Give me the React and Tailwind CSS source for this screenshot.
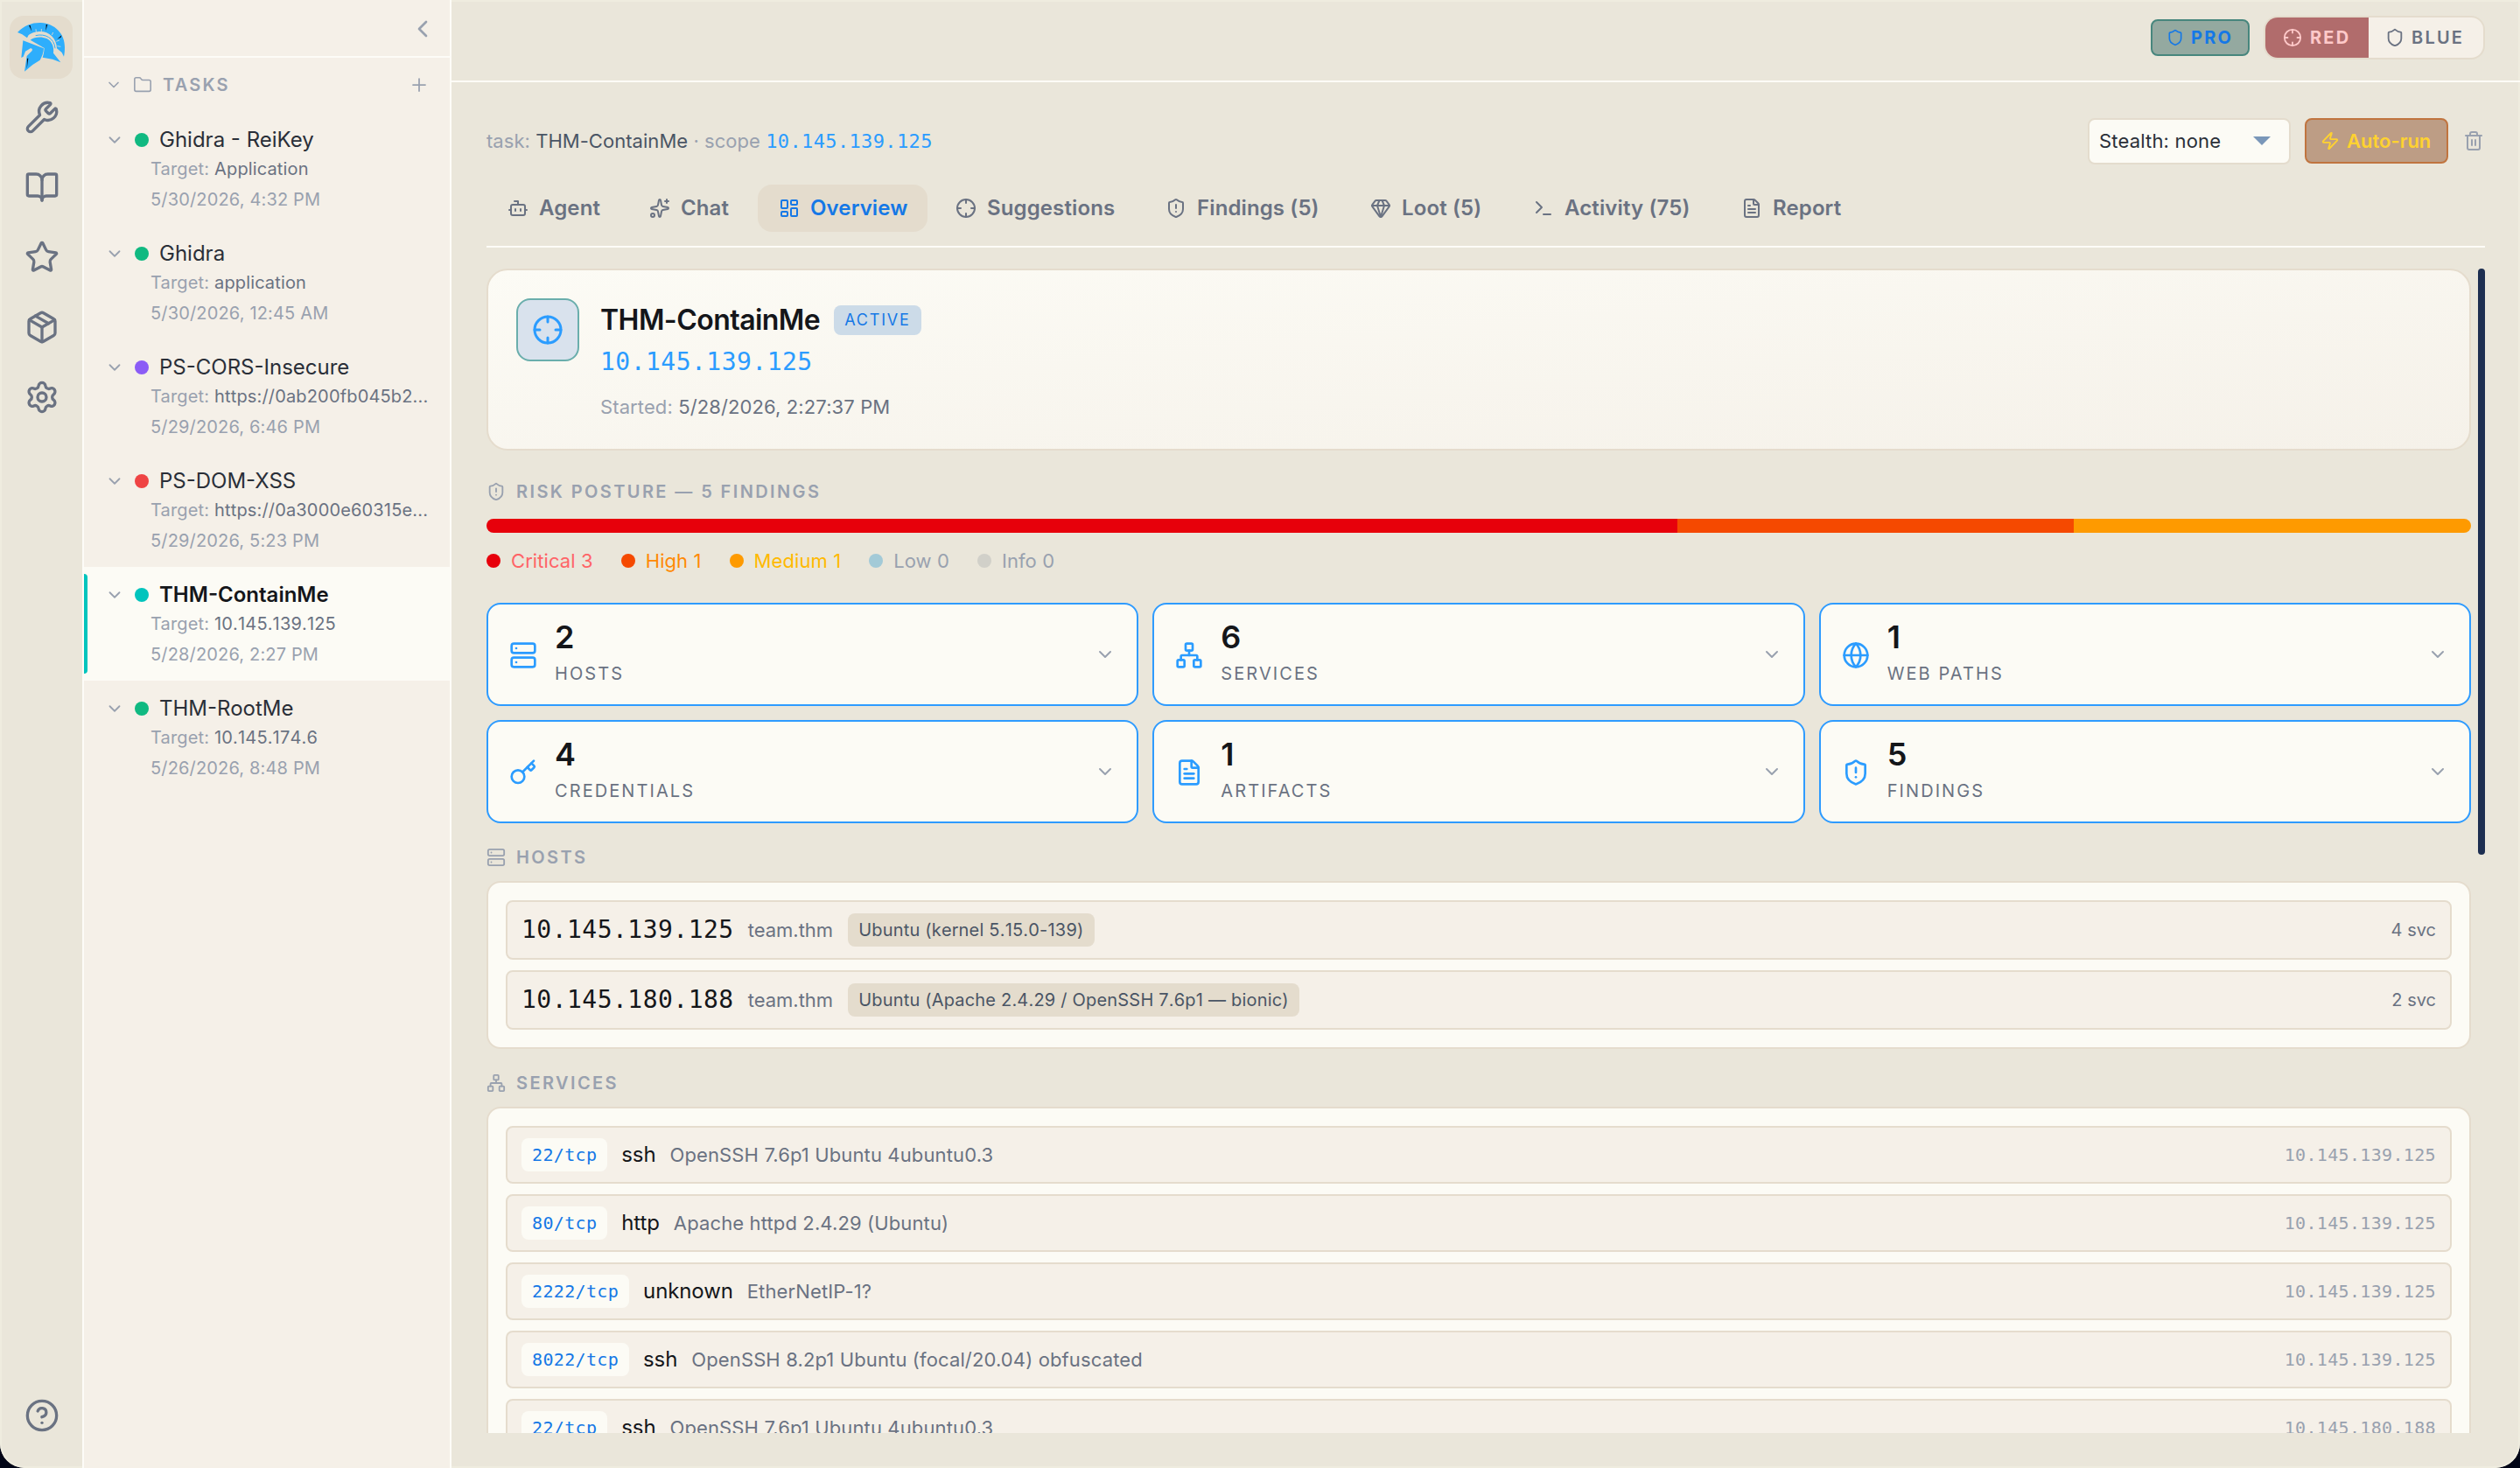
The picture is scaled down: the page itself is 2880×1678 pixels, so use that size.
import { useState } from "react";
import {
  BookOpen,
  Bot,
  ChevronDown,
  ChevronLeft,
  CircleQuestionMark,
  Crosshair,
  FileText,
  Folder,
  Gem,
  Globe,
  Key,
  LayoutDashboard,
  Network,
  Package,
  Plus,
  Server,
  Settings,
  Shield,
  ShieldAlert,
  Sparkles,
  Star,
  Terminal,
  Trash2,
  Wrench,
  Zap,
} from "lucide-react";

const tasks = [
  { name: "Ghidra - ReiKey", target: "Application", date: "5/30/2026, 4:32 PM", dot: "bg-[#10b981]" },
  { name: "Ghidra", target: "application", date: "5/30/2026, 12:45 AM", dot: "bg-[#10b981]" },
  { name: "PS-CORS-Insecure", target: "https://0ab200fb045b2...", date: "5/29/2026, 6:46 PM", dot: "bg-[#8b5cf6]" },
  { name: "PS-DOM-XSS", target: "https://0a3000e60315e...", date: "5/29/2026, 5:23 PM", dot: "bg-[#ef4444]" },
  { name: "THM-ContainMe", target: "10.145.139.125", date: "5/28/2026, 2:27 PM", dot: "bg-[#00c4bd]" },
  { name: "THM-RootMe", target: "10.145.174.6", date: "5/26/2026, 8:48 PM", dot: "bg-[#10b981]" },
];

const tabs = [
  { label: "Agent", icon: Bot, width: "w-[154px]" },
  { label: "Chat", icon: Sparkles, width: "w-[140px]" },
  { label: "Overview", icon: LayoutDashboard, width: "w-[194px]" },
  { label: "Suggestions", icon: Crosshair, width: "w-[232px]" },
  { label: "Findings (5)", icon: ShieldAlert, width: "w-[226px]" },
  { label: "Loot (5)", icon: Gem, width: "w-[178px]" },
  { label: "Activity (75)", icon: Terminal, width: "w-[230px]" },
  { label: "Report", icon: FileText, width: "w-[162px]" },
];

const severities = [
  { label: "Critical", count: 3, dot: "bg-[#e7000b]", text: "text-[#ff6467]" },
  { label: "High", count: 1, dot: "bg-[#f54900]", text: "text-[#ff8904]" },
  { label: "Medium", count: 1, dot: "bg-[#fe9a00]", text: "text-[#ffb900]" },
  { label: "Low", count: 0, dot: "bg-[#a3cad7]", text: "text-[#99a1af]" },
  { label: "Info", count: 0, dot: "bg-[#d1d0c9]", text: "text-[#99a1af]" },
];

const stats = [
  { value: 2, label: "HOSTS", icon: Server },
  { value: 6, label: "SERVICES", icon: Network },
  { value: 1, label: "WEB PATHS", icon: Globe },
  { value: 4, label: "CREDENTIALS", icon: Key },
  { value: 1, label: "ARTIFACTS", icon: FileText },
  { value: 5, label: "FINDINGS", icon: ShieldAlert },
];

const hosts = [
  { ip: "10.145.139.125", name: "team.thm", os: "Ubuntu (kernel 5.15.0-139)", svc: 4 },
  { ip: "10.145.180.188", name: "team.thm", os: "Ubuntu (Apache 2.4.29 / OpenSSH 7.6p1 — bionic)", svc: 2 },
];

const services = [
  { port: "22/tcp", name: "ssh", version: "OpenSSH 7.6p1 Ubuntu 4ubuntu0.3", ip: "10.145.139.125" },
  { port: "80/tcp", name: "http", version: "Apache httpd 2.4.29 (Ubuntu)", ip: "10.145.139.125" },
  { port: "2222/tcp", name: "unknown", version: "EtherNetIP-1?", ip: "10.145.139.125" },
  { port: "8022/tcp", name: "ssh", version: "OpenSSH 8.2p1 Ubuntu (focal/20.04) obfuscated", ip: "10.145.139.125" },
  { port: "22/tcp", name: "ssh", version: "OpenSSH 7.6p1 Ubuntu 4ubuntu0.3", ip: "10.145.180.188" },
];

const Mono = ({ className, children }) => (
  <span className={`font-['DejaVu_Sans_Mono',monospace] tracking-[0.017em] whitespace-nowrap ${className}`}>{children}</span>
);

const Logo = () => (
  <svg viewBox="33 54 216 216" className="size-[72px]" fill="#2eaefc">
    <path d="M60 111 C84 86 112 77 140 78 C187 80 223 116 222 162 C222 176 221 186 219 194 L212 180 L195 166 C194 128 166 106 134 108 C118 109 108 113 98 120 L93 130 L76 118 Z" />
    <path d="M122 122 C154 114 186 130 189 166" fill="none" stroke="#2eaefc" strokeWidth="3" />
    <path d="M104 137 C118 126 142 124 160 132 C178 141 186 160 183 182 L208 214 L180 203 L146 197 C150 186 151 176 152 165 Z" />
    <path d="M79 139 L150 166 C149 182 144 194 137 206 L112 222 L84 245 L92 192 L110 174 Q113 165 104 166 L87 176 L80 194 L73 198 Z" />
    <path d="M124 110 L123 100 M142 109 L142 99 M178 120 L182 111 M193 142 L204 138 M196 158 L208 160" stroke="#e4dccd" strokeWidth="2.5" />
    <path d="M99 87 L104 87 L109 108 Z M158 84 L163 84 L157 106 Z M211 121 L209 128 L196 134 Z M93 200 L97 200 L92 236 Z" fill="#07121f" />
  </svg>
);

const Rail = () => (
  <nav className="flex w-24 shrink-0 flex-col items-center border-r-2 border-[#fdfcf7] pt-[18px] pb-10 text-[#6a7282]">
    <button className="mb-6 size-[72px] rounded-2xl bg-[#e4dccd]">
      <Logo />
    </button>
    <div className="flex flex-1 flex-col gap-10 pl-0.5">
      <Wrench className="size-10" />
      <BookOpen className="size-10" />
      <Star className="size-10" />
      <Package className="size-10" />
      <Settings className="size-10" />
    </div>
    <CircleQuestionMark className="ml-0.5 size-10" />
  </nav>
);

const TaskItem = ({ task, active, onSelect }) => (
  <li
    onClick={onSelect}
    className={`relative h-[130px] cursor-pointer pt-[15px] pl-6 text-xl ${active ? "bg-[#fcfbf5]" : ""}`}
  >
    {active && <span className="absolute top-2 left-0 h-[114px] w-1 rounded-r bg-[#00c4bd]" />}
    <div className="flex h-[34px] items-center">
      <ChevronDown className="size-[22px] text-[#99a1af]" />
      <span className={`ml-3 size-4 rounded-full ${task.dot}`} />
      <span
        className={`ml-3 text-2xl ${active ? "font-semibold text-[#14161a]" : "text-[#2a2f38]"}`}
      >
        {task.name}
      </span>
    </div>
    <p className="h-[34px] pl-[52px] leading-[33px] tracking-[0.008em] whitespace-nowrap text-[#99a1af]">
      Target: <span className="text-[#6a7282] [font-kerning:none]">{task.target}</span>
    </p>
    <p className="h-[34px] pl-[52px] leading-[34px] tracking-[0.008em] whitespace-nowrap text-[#99a1af]">{task.date}</p>
  </li>
);

const Sidebar = ({ selected, setSelected }) => (
  <aside className="w-[420px] shrink-0 border-r-2 border-[#fdfcf7] bg-[#f5f0e8]">
    <div className="flex h-[66px] items-center justify-end border-b-2 border-[#fdfcf7] pt-0.5 pr-[15px]">
      <ChevronLeft className="size-8 text-[#99a1af]" />
    </div>
    <div className="flex h-[62px] items-center pr-[23px] pl-6 text-[#99a1af]">
      <ChevronDown className="size-5" />
      <Folder className="ml-3 size-[22px]" strokeWidth={1.75} />
      <span className="ml-3 flex-1 text-xl font-semibold tracking-[0.11em]">TASKS</span>
      <Plus className="size-6" strokeWidth={1.75} />
    </div>
    <ul>
      {tasks.map((task) => (
        <TaskItem
          key={task.name}
          task={task}
          active={selected === task.name}
          onSelect={() => setSelected(task.name)}
        />
      ))}
    </ul>
  </aside>
);

const TopBar = () => (
  <header className="flex h-[94px] shrink-0 items-start justify-end border-b-2 border-[#fdfcf7] pt-[18px] pr-10 text-xl font-bold tracking-[0.11em]">
    <div className="mt-1 mr-4 flex h-[42px] w-[113px] items-center gap-2 rounded-lg border-2 border-[#47867d] bg-[#94a9a0] pl-4 text-[#1578e6]">
      <Shield className="size-5" />
      PRO
    </div>
    <div className="flex h-[50px] w-[253px] overflow-hidden rounded-2xl border-2 border-[#e4dccd] bg-[#f5f0e8]">
      <div className="flex w-[118px] items-center gap-[9px] bg-[#b16c6c] pl-5 text-[#ffc9c9]">
        <Crosshair className="size-[22px]" />
        RED
      </div>
      <div className="flex items-center gap-2 pl-[19px] font-semibold text-[#6a7282]">
        <Shield className="size-[22px]" />
        BLUE
      </div>
    </div>
  </header>
);

const TaskHeader = () => (
  <div className="flex h-[54px] items-center text-[22px]">
    <p className="flex-1 tracking-[0.002em] text-[#99a1af]">
      task: <span className="text-[#4a5565]">THM-ContainMe</span> · scope{" "}
      <Mono className="text-[#2b9cff]">10.145.139.125</Mono>
    </p>
    <div className="flex h-[53px] w-[232px] items-center justify-between rounded-lg border-2 border-[#e4dccd] bg-[#fcfbf5] pr-[21px] pl-[11px] tracking-[0.008em] text-[#2a2f38]">
      Stealth: none
      <svg viewBox="0 0 20 10" className="h-2.5 w-5" fill="#7a97b9">
        <path d="M0 0H20L10 10Z" />
      </svg>
    </div>
    <button className="ml-4 flex h-[52px] w-[164px] items-center gap-2 rounded-lg border-2 border-[#c0743f] bg-[#bd9d85] pl-4 font-semibold text-[#ffd230]">
      <Zap className="size-[22px]" />
      Auto-run
    </button>
    <Trash2 className="mr-px ml-[17px] size-6 text-[#99a1af]" />
  </div>
);

const Tabs = ({ tab, setTab }) => (
  <div className="mt-[23px] flex h-[72px] items-start gap-2 border-b-2 border-[#fdfcf7]">
    {tabs.map(({ label, icon: Icon, width }) => (
      <button
        key={label}
        onClick={() => setTab(label)}
        className={`flex h-[54px] shrink-0 items-center gap-3 rounded-2xl pl-6 text-2xl font-semibold tracking-[0.005em] whitespace-nowrap ${width} ${
          tab === label ? "bg-[#e4dccd] text-[#1578e6]" : "text-[#6a7282]"
        }`}
      >
        <Icon className="size-6 shrink-0" />
        {label}
      </button>
    ))}
  </div>
);

const Heading = ({ icon: Icon, children }) => (
  <h3 className="flex h-7 items-center gap-3 text-xl font-semibold tracking-[0.12em] text-[#99a1af]">
    <Icon className="size-[22px]" />
    {children}
  </h3>
);

const Hero = () => (
  <section className="flex h-52 rounded-3xl border-2 border-[#e5dccd] bg-linear-to-br from-[#fcfbf5] to-[#f5f1e9] pt-8 pl-8">
    <div className="flex size-[72px] items-center justify-center rounded-2xl border-2 border-[#6aaeac] bg-[#d9e2ed] text-[#2b9cff]">
      <Crosshair className="size-9" />
    </div>
    <div className="ml-6">
      <div className="flex h-[50px] items-center gap-4">
        <h2 className="text-[32px] font-semibold tracking-[-0.017em] text-[#14161a]">THM-ContainMe</h2>
        <span className="flex h-[34px] items-center rounded-lg bg-[#ccdbe8] px-3 text-lg tracking-[0.1em] text-[#1578e6]">
          ACTIVE
        </span>
      </div>
      <p className="h-11 text-[28px] leading-[44px] text-[#2b9cff]">
        <Mono>10.145.139.125</Mono>
      </p>
      <p className="mt-2 h-11 text-[22px] leading-[44px] tracking-[0.005em] text-[#99a1af]">
        Started: <span className="text-[#6a7282]">5/28/2026, 2:27:37 PM</span>
      </p>
    </div>
  </section>
);

const StatCard = ({ value, label, icon: Icon }) => (
  <div className="flex h-[118px] items-center rounded-2xl border-2 border-[#2e9bff] bg-[#fcfbf5] px-6">
    <Icon className="mt-0.5 size-8 text-[#2b9cff]" />
    <div className="ml-5 flex-1">
      <div className="h-[43px] text-4xl leading-[39px] font-semibold text-[#14161a]">{value}</div>
      <div className="h-9 text-xl leading-9 tracking-[0.104em] text-[#6a7282]">{label}</div>
    </div>
    <ChevronDown className="size-6 text-[#99a1af]" />
  </div>
);

const Row = ({ className, children }) => (
  <div className={`flex shrink-0 items-center gap-4 rounded-lg border-2 border-[#e5dccd] bg-[#f5f0e8] px-4 ${className}`}>
    {children}
  </div>
);

const Overview = () => {
  const total = severities.reduce((sum, s) => sum + s.count, 0);

  return (
    <div className="mt-6 flex h-[1331px] overflow-hidden">
      <div className="w-[2268px]">
        <Hero />

        <div className="mt-[33px]">
          <Heading icon={ShieldAlert}>RISK POSTURE — 5 FINDINGS</Heading>
        </div>
        <div className="mt-[17px] flex h-4 overflow-hidden rounded-full">
          {severities.map((s) => (
            <div key={s.label} className={s.dot} style={{ width: `${(s.count / total) * 100}%` }} />
          ))}
        </div>
        <div className="mt-4 flex h-8 items-center gap-8 text-[22px] tracking-[0.004em]">
          {severities.map((s) => (
            <div key={s.label} className={`flex items-center gap-3 ${s.text}`}>
              <span className={`size-4 rounded-full ${s.dot}`} />
              {s.label} {s.count}
            </div>
          ))}
        </div>

        <div className="mt-8 grid grid-cols-3 gap-4">
          {stats.map((s) => (
            <StatCard key={s.label} {...s} />
          ))}
        </div>

        <div className="mt-[25px]">
          <Heading icon={Server}>HOSTS</Heading>
        </div>
        <section className="mt-[13px] flex flex-col gap-3 rounded-2xl border-2 border-[#e5dccd] bg-[#fcfbf5] p-5">
          {hosts.map((h) => (
            <Row key={h.ip} className="h-[68px]">
              <Mono className="text-[28px] text-[#14161a]">{h.ip}</Mono>
              <span className="text-[22px] text-[#6a7282]">{h.name}</span>
              <span className="ml-px flex h-[38px] items-center rounded-lg bg-[#e4dccd] px-3 text-xl tracking-[0.01em] text-[#4a5565] [font-kerning:none]">
                {h.os}
              </span>
              <span className="ml-auto text-xl text-[#6a7282]">{h.svc} svc</span>
            </Row>
          ))}
        </section>

        <div className="mt-[25px]">
          <Heading icon={Network}>SERVICES</Heading>
        </div>
        <section className="mt-[13px] flex flex-col gap-3 rounded-2xl border-2 border-[#e5dccd] bg-[#fcfbf5] p-5">
          {services.map((s, i) => (
            <Row key={i} className="h-[66px]">
              <span className="flex h-[38px] items-center rounded-lg bg-[#fcfbf5] px-3 text-xl text-[#1578e6]">
                <Mono>{s.port}</Mono>
              </span>
              <span className="text-2xl tracking-[-0.005em] text-[#14161a]">{s.name}</span>
              <span className="text-[22px] tracking-[0.006em] text-[#6a7282]">{s.version}</span>
              <Mono className="ml-auto text-xl text-[#99a1af]">{s.ip}</Mono>
            </Row>
          ))}
        </section>
      </div>
      <div className="ml-2 h-[670px] w-2 rounded-full bg-[#1d2e50]" />
    </div>
  );
};

const App = () => {
  const [selected, setSelected] = useState("THM-ContainMe");
  const [tab, setTab] = useState("Overview");

  return (
    <div className="h-[1678px] w-[2880px] overflow-hidden bg-[#020617] font-['Inter',sans-serif]">
      <div className="flex h-full overflow-hidden rounded-b-[28px] bg-[#eae6da] shadow-[inset_0_0_0_2px_#efecdf]">
        <Rail />
        <Sidebar selected={selected} setSelected={setSelected} />
        <main className="flex flex-1 flex-col">
          <TopBar />
          <div className="px-10 pt-10">
            <TaskHeader />
            <Tabs tab={tab} setTab={setTab} />
            <Overview />
          </div>
        </main>
      </div>
    </div>
  );
};

export default App;
